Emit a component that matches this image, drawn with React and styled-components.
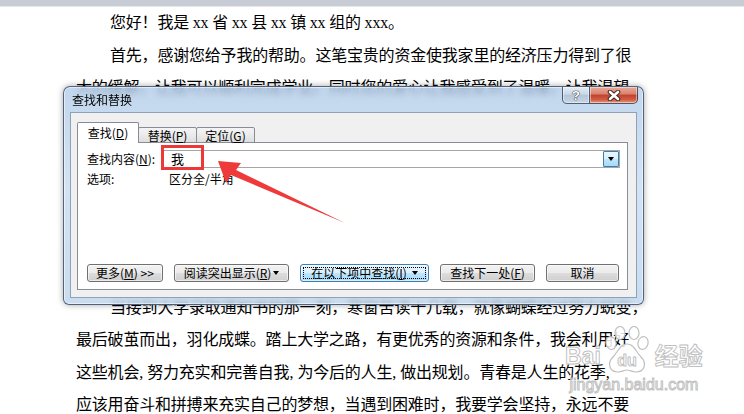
import styled, { createGlobalStyle } from "styled-components";

const GlobalStyle = createGlobalStyle`
  html, body {
    margin: 0;
    padding: 0;
    background: #fff;
  }
  #root {
    width: 744px;
    height: 414px;
  }
`;

const Screen = styled.div`
  position: relative;
  width: 744px;
  height: 414px;
  overflow: hidden;
  background: #fff;
`;

const TopBand = styled.div`
  height: 6px;
  background: #c8cdd5;
  border-bottom: 1px solid #e4e7eb;
`;

const Page = styled.div`
  padding-left: 76px;
  font-family: "Liberation Serif", "Noto Sans CJK SC", serif;
  font-size: 16px;
  line-height: 32.5px;
  color: #000;
`;

const Section = styled.div`
  margin-top: ${(p) => p.$offset || 0}px;
`;

const Line = styled.div`
  white-space: nowrap;
  letter-spacing: -0.2px;
  padding-left: ${(p) => (p.$indent ? 34 : 0)}px;
`;

const HalfComma = styled.span`
  display: inline-block;
  width: 8px;
`;

/* ---------- dialog window ---------- */

const Window = styled.div`
  position: absolute;
  left: 63px;
  top: 86px;
  width: 581px;
  height: 219px;
  box-sizing: border-box;
  display: flex;
  flex-direction: column;
  padding: 0 6px 6px 6px;
  border: 1px solid rgba(40, 60, 85, 0.75);
  border-radius: 7px 7px 6px 6px;
  background: linear-gradient(
    180deg,
    rgba(176, 203, 232, 0.78) 0%,
    rgba(198, 219, 241, 0.78) 45%,
    rgba(188, 211, 236, 0.8) 100%
  );
  backdrop-filter: blur(3px);
  box-shadow: inset 0 0 0 1px rgba(255, 255, 255, 0.55),
    0 0 6px rgba(0, 0, 0, 0.35);
  font-family: "Noto Sans CJK SC", "Liberation Sans", sans-serif;
  font-size: 12px;
  line-height: 14px;
  color: #000;
`;

const TitleBar = styled.div`
  height: 25px;
  display: flex;
  justify-content: space-between;
  align-items: flex-start;
`;

const Title = styled.div`
  padding: 6px 0 0 2px;
  font-size: 12px;
`;

const CaptionButtons = styled.div`
  display: flex;
  margin-right: -1px;
`;

const CaptionButton = styled.div`
  box-sizing: border-box;
  width: ${(p) => (p.$close ? 48 : 28)}px;
  height: 17px;
  display: flex;
  align-items: center;
  justify-content: center;
  border: 1px solid rgba(45, 62, 88, 0.8);
  border-top: none;
  border-left: ${(p) => (p.$close ? "none" : "1px solid rgba(45, 62, 88, 0.8)")};
  border-radius: ${(p) => (p.$close ? "0 0 5px 0" : "0 0 0 5px")};
  background: ${(p) =>
    p.$close
      ? "linear-gradient(180deg, #e9ab9b 0%, #d98470 42%, #c3442e 52%, #cf5b43 78%, #e8977b 100%)"
      : "linear-gradient(180deg, #e6edf4 0%, #cad7e5 45%, #b4c6d9 52%, #c6d6e6 100%)"};
  box-shadow: inset 0 0 0 1px rgba(255, 255, 255, 0.45);
`;

const HelpMark = styled.span`
  font-family: "Liberation Sans", sans-serif;
  font-weight: bold;
  font-size: 13px;
  line-height: 13px;
  color: #fff;
  text-shadow: 0 0 1px #333, 0 0 1px #333, 0 0 1px #333;
`;

const Client = styled.div`
  height: 186px;
  box-sizing: border-box;
  display: flex;
  flex-direction: column;
  padding: 9px 8px 7px 6px;
  border: 1px solid #8ea1b6;
  background: #f0f0f0;
`;

const TabStrip = styled.div`
  position: relative;
  z-index: 1;
  display: flex;
  align-items: flex-end;
  height: 21px;
  margin-bottom: -1px;
`;

const Tab = styled.div`
  box-sizing: border-box;
  width: ${(p) => p.$w}px;
  height: ${(p) => (p.$active ? 21 : 16)}px;
  margin-left: ${(p) => (p.$active ? 0 : -1)}px;
  display: flex;
  align-items: center;
  justify-content: center;
  padding-top: ${(p) => (p.$active ? 0 : 1)}px;
  border: 1px solid #898c95;
  border-bottom: ${(p) => (p.$active ? "none" : "1px solid #898c95")};
  border-radius: 2px 2px 0 0;
  background: ${(p) =>
    p.$active ? "#fff" : "linear-gradient(180deg, #f4f4f4 0%, #ebebeb 50%, #dedede 100%)"};
`;

const Key = styled.span`
  text-decoration: underline;
`;

const Panel = styled.div`
  flex: 1;
  display: flex;
  flex-direction: column;
  padding: 7px 8px 7px 9px;
  border: 1px solid #898c95;
  background: #fff;
`;

const FieldRow = styled.div`
  display: grid;
  grid-template-columns: 75px 1fr;
  align-items: center;
  margin-top: ${(p) => p.$gap || 0}px;
`;

const ComboBox = styled.div`
  box-sizing: border-box;
  height: 18px;
  margin-right: -1px;
  display: flex;
  align-items: center;
  border: 1px solid #a5a5a5;
  background: #fff;
`;

const ComboValue = styled.span`
  flex: 1;
  padding-left: 8px;
  font-size: 13px;
`;

const DropButton = styled.div`
  box-sizing: border-box;
  width: 16px;
  height: 16px;
  display: flex;
  align-items: center;
  justify-content: center;
  border: 1px solid #3c7fb1;
  border-radius: 1px;
  background: linear-gradient(180deg, #eaf6fd 0%, #d9f0fc 50%, #bee6fd 50%, #a7d9f5 100%);
`;

const Caret = styled.span`
  display: inline-block;
  width: 0;
  height: 0;
  margin-left: ${(p) => p.$space || 0}px;
  border-left: 3.5px solid transparent;
  border-right: 3.5px solid transparent;
  border-top: 4px solid #000;
`;

const OptionValue = styled.span`
  padding-left: 7px;
`;

const ButtonRow = styled.div`
  display: flex;
  gap: 11px;
  margin-top: auto;
`;

const Button = styled.div`
  position: relative;
  box-sizing: border-box;
  width: ${(p) => p.$w}px;
  height: 18px;
  display: flex;
  align-items: center;
  justify-content: center;
  border: 1px solid ${(p) => (p.$focused ? "#3c7fb1" : "#707070")};
  border-radius: 3px;
  background: ${(p) =>
    p.$focused
      ? "linear-gradient(180deg, #eaf6fd 0%, #d9f0fc 50%, #bee6fd 50%, #a7d9f5 100%)"
      : "linear-gradient(180deg, #f2f2f2 0%, #ebebeb 50%, #dddddd 50%, #cfcfcf 100%)"};
  box-shadow: inset 0 0 0 1px rgba(255, 255, 255, 0.6);
  white-space: nowrap;

  &::after {
    content: "";
    display: ${(p) => (p.$focused ? "block" : "none")};
    position: absolute;
    inset: 2px;
    border: 1px dotted #000;
  }
`;

/* ---------- annotation overlay ---------- */

const Highlight = styled.div`
  position: absolute;
  left: 161px;
  top: 145px;
  width: 43px;
  height: 25px;
  box-sizing: border-box;
  border: 3px solid #ee3838;
`;

const ArrowLayer = styled.svg`
  position: absolute;
  left: 0;
  top: 0;
  pointer-events: none;
`;

/* ---------- watermark ---------- */

const Watermark = styled.div`
  position: absolute;
  left: 565px;
  top: 326px;
  display: flex;
  flex-direction: column;
  align-items: center;
  color: rgba(255, 255, 255, 0.85);
  -webkit-text-stroke: 1px rgba(185, 185, 185, 0.9);
`;

const MarkRow = styled.div`
  display: flex;
  align-items: center;
`;

const MarkLatin = styled.span`
  font-family: "Liberation Sans", sans-serif;
  font-weight: bold;
  font-size: 23px;
  line-height: 24px;
  margin-top: 12px;
`;

const MarkCjk = styled.span`
  font-family: "Noto Sans CJK SC", sans-serif;
  font-weight: bold;
  font-size: 24px;
  line-height: 26px;
  margin-top: 10px;
  margin-left: 2px;
`;

const MarkUrl = styled.span`
  font-family: "Liberation Sans", sans-serif;
  font-size: 16px;
  line-height: 16px;
  margin-top: 3px;
`;

function Paw() {
  const stroke = "rgba(185,185,185,0.9)";
  const fill = "rgba(255,255,255,0.85)";
  return (
    <svg width="52" height="48" viewBox="0 0 52 48">
      <g fill={fill} stroke={stroke} strokeWidth="1.2">
        <ellipse cx="10" cy="17" rx="5" ry="6.5" transform="rotate(-15 10 17)" />
        <ellipse cx="19" cy="7" rx="5" ry="6.5" />
        <ellipse cx="33" cy="7" rx="5" ry="6.5" />
        <ellipse cx="42" cy="17" rx="5" ry="6.5" transform="rotate(15 42 17)" />
        <path d="M26 18 C19 18 17 26 12 31 C6 37 8 46 17 46 C21 46 23 44 26 44 C29 44 31 46 35 46 C44 46 46 37 40 31 C35 26 33 18 26 18 Z" />
      </g>
      <text
        x="26"
        y="40"
        textAnchor="middle"
        fontFamily="Liberation Sans, sans-serif"
        fontWeight="bold"
        fontSize="16"
        fill={fill}
        stroke={stroke}
        strokeWidth="1"
      >
        du
      </text>
    </svg>
  );
}

function CloseGlyph() {
  return (
    <svg width="14" height="11" viewBox="0 0 14 11">
      <path d="M3 2 L11 9 M11 2 L3 9" stroke="#3a2a28" strokeWidth="4.6" strokeLinecap="round" />
      <path d="M3 2 L11 9 M11 2 L3 9" stroke="#fff" strokeWidth="2.6" strokeLinecap="round" />
    </svg>
  );
}

export default function App() {
  return (
    <Screen>
      <GlobalStyle />
      <TopBand />
      <Page>
        <Section>
          <Line $indent>您好！我是 xx 省 xx 县 xx 镇 xx 组的 xxx。</Line>
          <Line $indent>首先，感谢您给予我的帮助。这笔宝贵的资金使我家里的经济压力得到了很</Line>
          <Line>大的缓解，让我可以顺利完成学业。同时您的爱心让我感受到了温暖，让我渴望</Line>
        </Section>
        <Section $offset={187}>
          <Line $indent>当接到大学录取通知书的那一刻，寒窗苦读十几载，就像蝴蝶经过努力蜕变，</Line>
          <Line>最后破茧而出，羽化成蝶。踏上大学之路，有更优秀的资源和条件，我会利用好</Line>
          <Line>
            这些机会<HalfComma>,</HalfComma>努力充实和完善自我<HalfComma>,</HalfComma>为今后的人生
            <HalfComma>,</HalfComma>做出规划。青春是人生的花季<HalfComma>,</HalfComma>
          </Line>
          <Line>应该用奋斗和拼搏来充实自己的梦想，当遇到困难时，我要学会坚持，永远不要</Line>
        </Section>
      </Page>

      <Watermark>
        <MarkRow>
          <MarkLatin>Bai</MarkLatin>
          <Paw />
          <MarkCjk>经验</MarkCjk>
        </MarkRow>
        <MarkUrl>jingyan.baidu.com</MarkUrl>
      </Watermark>

      <Window>
        <TitleBar>
          <Title>查找和替换</Title>
          <CaptionButtons>
            <CaptionButton>
              <HelpMark>?</HelpMark>
            </CaptionButton>
            <CaptionButton $close>
              <CloseGlyph />
            </CaptionButton>
          </CaptionButtons>
        </TitleBar>
        <Client>
          <TabStrip>
            <Tab $active $w={62}>
              查找(<Key>D</Key>)
            </Tab>
            <Tab $w={59}>
              替换(<Key>P</Key>)
            </Tab>
            <Tab $w={59}>
              定位(<Key>G</Key>)
            </Tab>
          </TabStrip>
          <Panel>
            <FieldRow>
              <span>
                查找内容(<Key>N</Key>):
              </span>
              <ComboBox>
                <ComboValue>我</ComboValue>
                <DropButton>
                  <Caret />
                </DropButton>
              </ComboBox>
            </FieldRow>
            <FieldRow $gap={4}>
              <span>选项:</span>
              <OptionValue>区分全/半角</OptionValue>
            </FieldRow>
            <ButtonRow>
              <Button $w={76}>
                更多(<Key>M</Key>) &gt;&gt;
              </Button>
              <Button $w={115}>
                阅读突出显示(<Key>R</Key>)
                <Caret $space={2} />
              </Button>
              <Button $w={129} $focused>
                在以下项中查找(<Key>I</Key>)
                <Caret $space={5} />
              </Button>
              <Button $w={95}>
                查找下一处(<Key>F</Key>)
              </Button>
              <Button $w={73}>取消</Button>
            </ButtonRow>
          </Panel>
        </Client>
      </Window>

      <Highlight />
      <ArrowLayer width="744" height="414" viewBox="0 0 744 414">
        <polygon
          points="218,161 241,163 236,170 345,223 231,175 226,183"
          fill="#ef3a3a"
        />
      </ArrowLayer>
    </Screen>
  );
}
